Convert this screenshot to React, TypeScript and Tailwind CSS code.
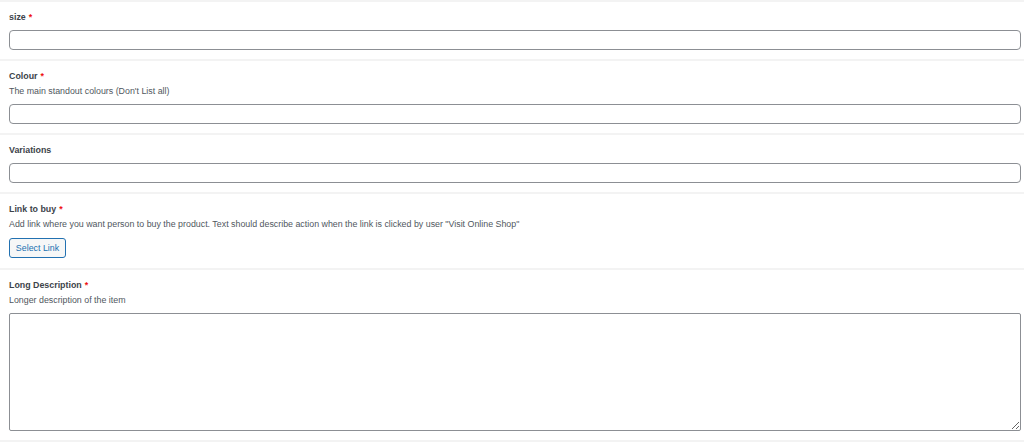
import React from "react";

type FieldProps = {
  label: string;
  required?: boolean;
  description?: string;
  loose?: boolean;
  children: React.ReactNode;
};

function Field({ label, required, description, loose, children }: FieldProps) {
  return (
    <div
      className={`border-t-2 border-[#f3f3f3] pl-[9px] pr-[3px] pt-[9px] ${
        loose ? "pb-[10px]" : "pb-[9px]"
      }`}
    >
      <div
        className={`text-[8.85px] leading-[12px] font-bold text-[#3c434a] ${
          description ? "mb-[3px]" : "mb-[7px]"
        }`}
      >
        {label}
        {required && <span className="text-[#e11] ml-[3px]">*</span>}
      </div>
      {description && (
        <p
          className={`text-[8.85px] leading-[12px] text-[#50575e] ${
            loose ? "mb-[8px]" : "mb-[7px]"
          }`}
        >
          {description}
        </p>
      )}
      {children}
    </div>
  );
}

const inputCls =
  "block w-full h-[20px] rounded-[4px] border border-[#8c8f94] bg-white outline-none";

export default function App() {
  return (
    <div className="w-[1024px] h-[442px] overflow-hidden bg-white font-['Liberation_Sans',Arial,sans-serif]">
      <Field label="size" required>
        <input type="text" className={inputCls} />
      </Field>
      <Field label="Colour" required description="The main standout colours (Don't List all)">
        <input type="text" className={inputCls} />
      </Field>
      <Field label="Variations">
        <input type="text" className={inputCls} />
      </Field>
      <Field
        label="Link to buy"
        required
        loose
        description={'Add link where you want person to buy the product. Text should describe action when the link is clicked by user "Visit Online Shop"'}
      >
        <button
          type="button"
          className="block h-[20px] w-[57px] rounded-[3px] border border-[#2271b1] bg-[#f6f7f7] text-[8.85px] leading-[18px] text-[#2271b1]"
        >
          Select Link
        </button>
      </Field>
      <Field label="Long Description" required description="Longer description of the item">
        <textarea className="block w-full h-[118px] rounded-[2px] border border-[#8c8f94] bg-white outline-none" />
      </Field>
      <div className="border-t-2 border-[#f3f3f3]" />
    </div>
  );
}
